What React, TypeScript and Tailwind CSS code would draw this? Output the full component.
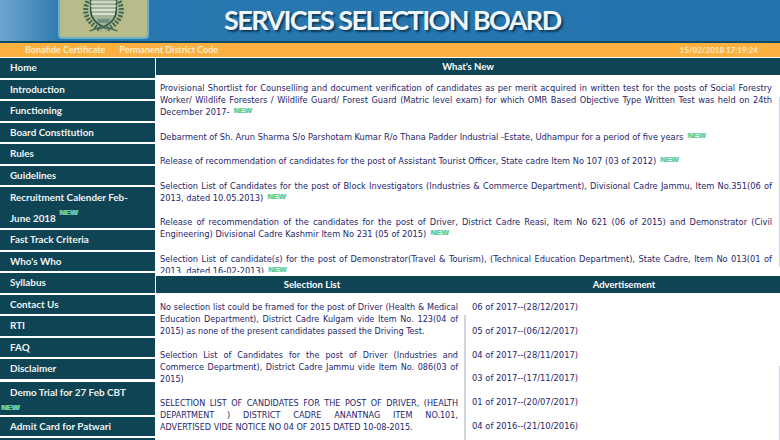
const menuTop = ['Home', 'Introduction', 'Functioning', 'Board Constitution', 'Rules', 'Guidelines']
const menuMid = ['Fast Track Criteria', "Who's Who", 'Syllabus', 'Contact Us', 'RTI', 'FAQ', 'Disclaimer']

const news = [
  'Provisional Shortlist for Counselling and document verification of candidates as per merit acquired in written test for the posts of Social Forestry Worker/ Wildlife Foresters / Wildlife Guard/ Forest Guard (Matric level exam) for which OMR Based Objective Type Written Test was held on 24th December 2017- ',
  'Debarment of Sh. Arun Sharma S/o Parshotam Kumar R/o Thana Padder Industrial -Estate, Udhampur for a period of five years ',
  'Release of recommendation of candidates for the post of Assistant Tourist Officer, State cadre Item No 107 (03 of 2012) ',
  'Selection List of Candidates for the post of Block Investigators (Industries & Commerce Department), Divisional Cadre Jammu, Item No.351(06 of 2013, dated 10.05.2013) ',
  'Release of recommendation of the candidates for the post of Driver, District Cadre Reasi, Item No 621 (06 of 2015) and Demonstrator (Civil Engineering) Divisional Cadre Kashmir Item No 231 (05 of 2015) ',
  'Selection List of candidate(s) for the post of Demonstrator(Travel & Tourism), (Technical Education Department), State Cadre, Item No 013(01 of 2013, dated 16-02-2013) ',
]

// line breaks follow the original page, the last line of each block stays left aligned
const selections = [
  [
    'No selection list could be framed for the post of Driver (Health & Medical',
    'Education Department), District Cadre Kulgam vide Item No. 123(04 of',
    '2015) as none of the present candidates passed the Driving Test.',
  ],
  [
    'Selection List of Candidates for the post of Driver (Industries and',
    'Commerce Department), District Cadre Jammu vide Item No. 086(03 of',
    '2015)',
  ],
  [
    'SELECTION LIST OF CANDIDATES FOR THE POST OF DRIVER, (HEALTH',
    'DEPARTMENT ) DISTRICT CADRE ANANTNAG ITEM NO.101,',
    'ADVERTISED VIDE NOTICE NO 04 OF 2015 DATED 10-08-2015.',
  ],
]

const adverts = [
  '06 of 2017--(28/12/2017)',
  '05 of 2017--(06/12/2017)',
  '04 of 2017--(28/11/2017)',
  '03 of 2017--(17/11/2017)',
  '01 of 2017--(20/07/2017)',
  '04 of 2016--(21/10/2016)',
]

function NewTag() {
  return (
    <span className="ml-[2px] inline-block align-top font-['Liberation_Sans',sans-serif] text-[8px] leading-[9px] font-bold tracking-tight text-[#5ccf7a] [text-shadow:-1px_0_0_#8fd6ff]">
      NEW
    </span>
  )
}

function MenuItem({ label }: { label: string }) {
  return (
    <div className="h-[19.5px] shrink-0 bg-[#0e4453] pl-[10px] font-['Lato',sans-serif] text-[9.9px] leading-[19.5px] font-bold text-[#eef3f3]">
      {label}
    </div>
  )
}

export default function App() {
  return (
    <div className="h-[440px] w-[780px] overflow-hidden bg-white font-['DejaVu_Sans_Condensed','Liberation_Sans',sans-serif]">
      <header className="relative h-[41px] bg-[linear-gradient(90deg,#6ea6cf_0%,#2a78b0_8%,#2273ad_100%)]">
        <div className="absolute left-[58px] top-[-8px] flex h-[47px] w-[91px] items-end justify-center rounded-b-[4px] border-2 border-[#66b0c8] bg-[#b8bb8c]">
          <svg viewBox="0 0 88 45" className="h-[45px] w-[88px]" fill="none">
            <path d="M30 6c-7 10-6 24 12 32M58 6c7 10 6 24-12 32" stroke="#3f6a55" strokeWidth="5" strokeDasharray="2 1.6" />
            <path d="M31 0h26v18c0 9-6 14-13 17-7-3-13-8-13-17z" fill="#9fb29a" stroke="#2f5240" strokeWidth="1.5" />
            <path d="M31 10h26M31 14h26M32 18h24M33 22h22" stroke="#eef0de" strokeWidth="1.4" />
            <path d="M38 27h12v4H38z" fill="#6f8f80" />
            <path d="M30 39c9-4 19-4 28 0" stroke="#3f6a55" strokeWidth="1.4" />
          </svg>
        </div>
        <h1 className="absolute left-[224px] top-[2px] font-['Lato',sans-serif] text-[27px] leading-[36px] font-bold tracking-[-1.6px] text-[#eef6fb] [text-shadow:2px_2px_2px_#0f3a58]">
          SERVICES SELECTION BOARD
        </h1>
      </header>
      <div className="h-[2px] bg-[#0f4a60]" />
      <div className="flex h-[14px] items-center justify-between bg-[#fbb040] pr-[22px] pl-[25px] font-['Lato',sans-serif] text-[9px] font-bold text-[#fdeccb]">
        <div className="flex gap-[14px]">
          <span>Bonafide Certificate</span>
          <span>Permanent District Code</span>
        </div>
        <span className="text-[8px]">15/02/2018 17:19:24</span>
      </div>
      <div className="h-[1px] bg-white" />
      <div className="flex gap-[1px]">
        <nav className="flex w-[155px] shrink-0 flex-col gap-[2px]">
          {menuTop.map(m => <MenuItem key={m} label={m} />)}
          <div className="h-[41px] shrink-0 bg-[#0e4453] pl-[10px] font-['Lato',sans-serif] text-[9.9px] leading-[20.5px] font-bold text-[#eef3f3]">
            Recruitment Calender Feb-
            <br />
            June 2018 <NewTag />
          </div>
          {menuMid.map(m => <MenuItem key={m} label={m} />)}
          <div className="mt-[1px] h-[33px] shrink-0 bg-[#0e4453] pl-[10px] font-['Lato',sans-serif] text-[9.9px] leading-[21px] font-bold text-[#eef3f3]">
            Demo Trial for 27 Feb CBT
            <div className="-ml-[10px] leading-[9px]"><NewTag /></div>
          </div>
          <MenuItem label="Admit Card for Patwari" />
          <MenuItem label="" />
        </nav>
        <main className="relative min-w-0 flex-1">
          <div className="h-[17px] bg-[#0e4453] text-center font-['Lato',sans-serif] text-[9.5px] leading-[17px] font-bold text-white">What's New</div>
          <div className="relative h-[198px] overflow-hidden pt-[7px] pr-[8px] pl-[4px]">
            {news.map(n => (
              <p key={n} className="mb-[12.5px] text-justify text-[9.2px] leading-[12px] text-[#26266a]">
                {n}<NewTag />
              </p>
            ))}
            <div className="absolute top-[22px] right-0 h-[170px] w-[1px] bg-gray-300" />
          </div>
          <div className="mt-[3px] flex h-[17px] bg-[#0e4453] font-['Lato',sans-serif] text-[9.5px] leading-[17px] font-bold text-white">
            <div className="w-[312px] text-center">Selection List</div>
            <div className="flex-1 text-center">Advertisement</div>
          </div>
          <div className="flex">
            <div className="w-[308px] shrink-0 pt-[8px] pr-[6px] pl-[4px]">
              {selections.map(lines => (
                <div key={lines[0]} className="mb-[12px] text-[9px] leading-[12px] text-[#26266a]">
                  {lines.map((line, i) => (
                    <p key={line} className={i < lines.length - 1 ? '[text-align-last:justify]' : ''}>{line}</p>
                  ))}
                </div>
              ))}
            </div>
            <div className="mt-[22px] h-[126px] w-[2px] shrink-0 bg-gray-300" />
            <div className="pt-[8px] pl-[6px]">
              {adverts.map(a => (
                <p key={a} className="mb-[11.8px] text-[9.3px] leading-[12px] text-[#26266a]">{a}</p>
              ))}
            </div>
          </div>
          <div className="absolute right-0 top-[308px] h-[75px] w-[1px] bg-gray-300" />
        </main>
      </div>
    </div>
  )
}
